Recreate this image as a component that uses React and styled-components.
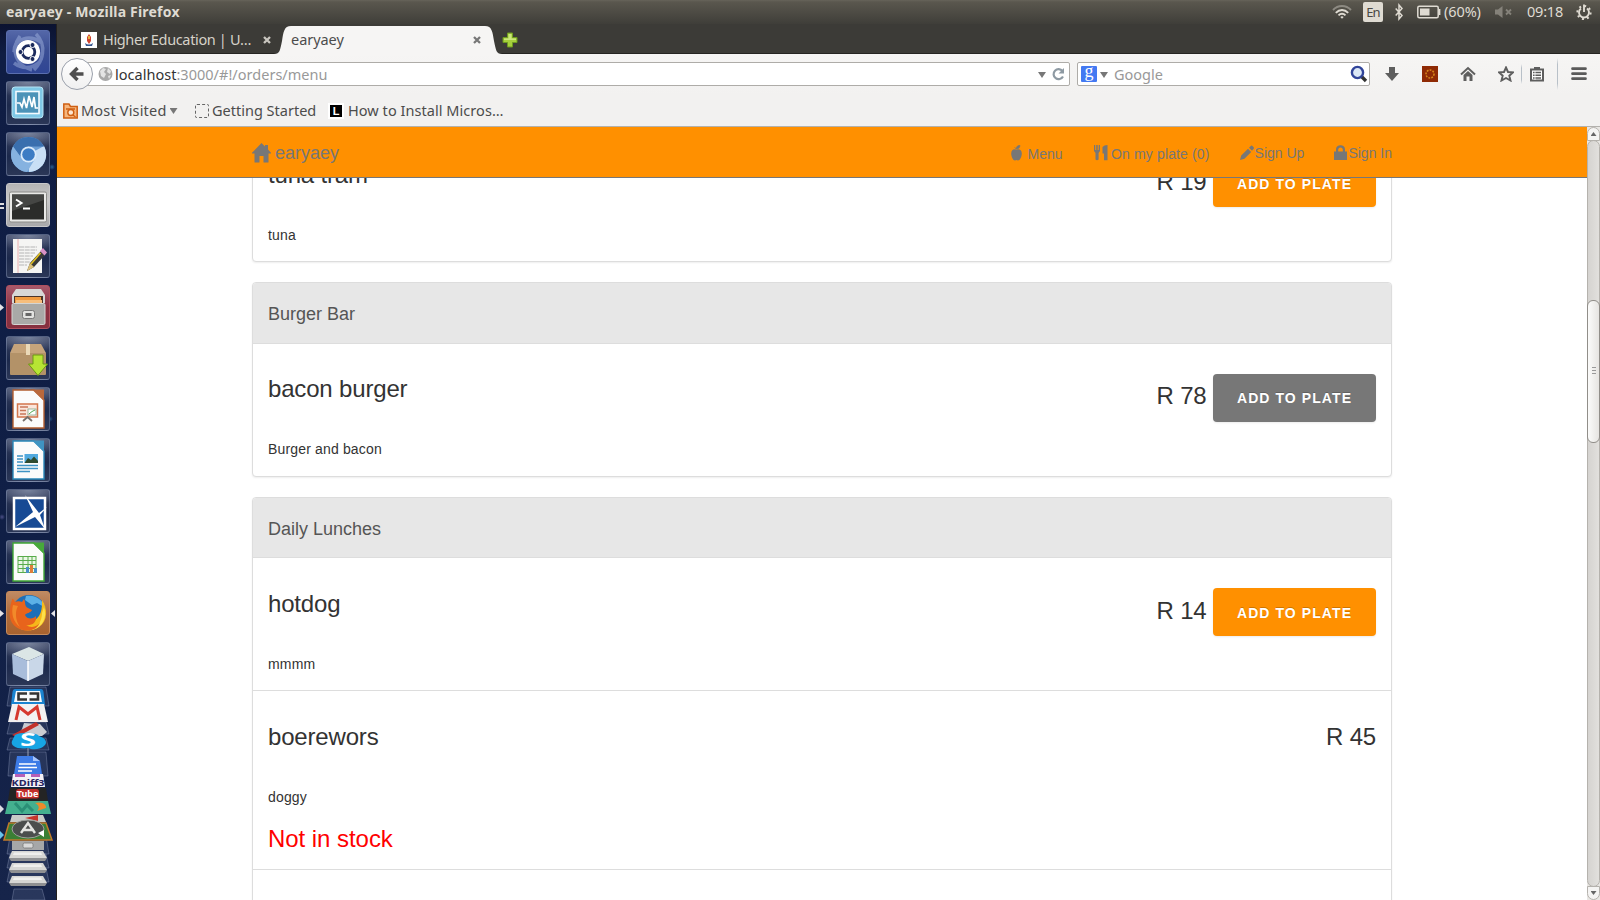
import React from "react";
import styled, { createGlobalStyle, css } from "styled-components";

const GlobalStyle = createGlobalStyle`
  *, *::before, *::after { box-sizing: border-box; }
  body { margin: 0; overflow: hidden; background: #fff; }
  svg { display: block; flex: none; }
`;

const uiFont = `"Noto Sans", "Open Sans", sans-serif`;
const pageFont = `"Liberation Sans", Arial, sans-serif`;

/* ---------- desktop shell ---------- */

const Desktop = styled.div`
  width: 1600px;
  height: 900px;
  display: flex;
  flex-direction: column;
  overflow: hidden;
  font-family: ${uiFont};
`;

const TopPanel = styled.header`
  height: 24px;
  flex: none;
  display: flex;
  align-items: center;
  justify-content: space-between;
  padding: 0 8px 0 6px;
  background: linear-gradient(#67645a 0, #5a574e 2px, #3f3e39 100%);
  color: #dfdbd2;
`;

const WindowTitle = styled.span`
  font-size: 14px;
  font-weight: 700;
  line-height: 24px;
  letter-spacing: 0.2px;
  white-space: nowrap;
`;

const Indicators = styled.div`
  display: flex;
  align-items: center;
  height: 24px;
`;

const Indicator = styled.span`
  width: ${(p) => p.$w}px;
  height: 24px;
  margin-left: ${(p) => p.$gap || 0}px;
  font-size: 14.5px;
  line-height: 23px;
  letter-spacing: ${(p) => p.$track || "0"};
  white-space: nowrap;
`;

const LangBadge = styled.span`
  width: 20px;
  height: 20px;
  margin-left: 11px;
  border-radius: 2px;
  background: #dfdbd2;
  color: #4a4843;
  font-size: 13px;
  line-height: 20px;
  text-align: center;
  letter-spacing: -0.8px;
`;

const Workspace = styled.div`
  flex: 1;
  display: flex;
  min-height: 0;
`;

/* ---------- launcher ---------- */

const LauncherBar = styled.aside`
  width: 57px;
  flex: none;
  display: flex;
  flex-direction: column;
  align-items: flex-start;
  gap: 7px;
  padding: 6px 0 0 6px;
  border-right: 1px solid #23201f;
  background:
    radial-gradient(circle at 52px 143px, #2a5f8e 0, transparent 3px),
    radial-gradient(circle at 27px 186px, #24507e 0, transparent 3px),
    radial-gradient(circle at 50px 395px, #24507e 0, transparent 3px),
    radial-gradient(circle at 2px 493px, #4b4f86 0, transparent 3px),
    linear-gradient(#0b1230 0, #0f1d44 30px, #101f46 60%, #16244a 100%);
`;

const Tile = styled.div`
  position: relative;
  width: 44px;
  height: 44px;
  flex: none;
  border-radius: 3px;
  border: 1px solid ${(p) => p.$edge || "rgba(150,165,200,0.38)"};
  background: ${(p) =>
    p.$bg ||
    "radial-gradient(ellipse 36px 16px at 50% 0, rgba(190,200,220,0.5), transparent), linear-gradient(#36405f, #1c294c 55%, #2b3757)"};
`;

const Pip = styled.i`
  position: absolute;
  top: 18px;
  ${(p) => (p.$right ? "right: -6px;" : "left: -7px;")}
  width: 4px;
  height: 7px;
  background: #e4e4e8;
  clip-path: ${(p) =>
    p.$right
      ? "polygon(100% 0, 100% 100%, 0 50%)"
      : "polygon(0 0, 100% 50%, 0 100%)"};
`;

const DoublePip = styled.i`
  position: absolute;
  top: 19px;
  left: -7px;
  width: 4px;
  height: 6px;
  border-top: 2px solid #dcdce0;
  border-bottom: 2px solid #dcdce0;
`;

const TileArt = styled.svg.attrs({ viewBox: "0 0 44 44", width: 44, height: 44 })`
  margin: -1px;
`;

const FoldedStack = styled.svg.attrs({ viewBox: "0 0 57 214", width: 57, height: 214 })`
  margin: -7px 0 0 -6px;
`;

const DocumentArt = ({ edge, corner, children }) => (
  <TileArt>
    <path d="M7 3H28L38 13V41H7Z" fill="#fbfbfb" stroke={edge} strokeWidth="1.4" />
    <path d="M26 2.5H38V14Z" fill={corner} />
    {children}
  </TileArt>
);

const UbuntuArt = () => (
  <TileArt>
    <path d="M8 22C8 8 24 4 36 13M36 22C38 36 20 42 8 33M14 6C4 20 10 36 26 40M30 4C42 16 36 32 28 40" fill="none" stroke="#a9bbe4" strokeOpacity=".45" strokeWidth="3.5" />
    <circle cx="22" cy="22" r="12" fill="#fff" />
    <circle cx="22.500" cy="22" r="6.300" fill="none" stroke="#1b2a5c" strokeWidth="2.800" />
    <g fill="#1b2a5c" stroke="#fff" strokeWidth="1">
      <circle cx="14.500" cy="22" r="2.500" />
      <circle cx="26.500" cy="15" r="2.500" />
      <circle cx="26.500" cy="29" r="2.500" />
    </g>
  </TileArt>
);

const MonitorArt = () => (
  <TileArt>
    <rect x="6" y="6" width="31" height="31" rx="3" fill="#7fc8e6" stroke="#b8e4f4" />
    <rect x="10" y="10.500" width="23" height="22" fill="#4c93b8" stroke="#f4fbff" strokeWidth="1.6" />
    <path d="M11 22H14L16 26L18 18L20.500 27L23 15L26 26L28 16L29.500 27H32" fill="none" stroke="#fff" strokeWidth="1.700" />
  </TileArt>
);

const ChromiumArt = () => (
  <TileArt>
    <circle cx="22.500" cy="22.500" r="17.500" fill="#6d9fd4" />
    <path d="M22.500 22.500L38 14A17.500 17.500 0 0 1 23 40Z" fill="#c9dff5" />
    <path d="M7 14.500A17.500 17.500 0 0 1 38 14.500H22L14 24Z" fill="#3a6fae" />
    <path d="M7 14.500A17.500 17.500 0 0 0 21 40L29 27L14 24Z" fill="#86b2e0" />
    <circle cx="22.500" cy="22.500" r="8" fill="#dcebfa" />
    <circle cx="22.500" cy="22.500" r="6.300" fill="#3d7cc4" />
  </TileArt>
);

const TerminalArt = () => (
  <TileArt>
    <rect x="3.500" y="9" width="37" height="30" rx="1.500" fill="#e9e9e7" stroke="#8b8b88" />
    <rect x="6" y="11.500" width="32" height="25" fill="#2b2c2a" />
    <path d="M6 11.500H38V17L6 28Z" fill="#454644" />
    <path d="M10 16.500L15.500 20L10 23.500M17 25.500H24" fill="none" stroke="#fff" strokeWidth="2" />
  </TileArt>
);

const EditorArt = () => (
  <TileArt>
    <path d="M7 5H36V39H7Z" fill="#f5f5f3" />
    <path d="M12 5V39" stroke="#e8a0a0" strokeWidth=".8" />
    <path d="M13 13H31M13 16H31M13 19H29M13 22H27M13 25H25M13 28H24M13 31H21" stroke="#b5b5b5" strokeWidth="1" strokeDasharray="5 .7" />
    <path d="M21 37L24 29L35 17L39 21L28 33Z" fill="#3a3a38" />
    <path d="M24 29L28 33L21 37Z" fill="#dcc17a" />
    <path d="M25 30L34.500 19" stroke="#e3c21f" strokeWidth="1.600" />
    <path d="M34 17L37 14L41 18.500L38.500 21.500Z" fill="#d892c6" />
  </TileArt>
);

const FilesArt = () => (
  <TileArt>
    <path d="M6 10L10 4H35L39 10V18H6Z" fill="#d8d7d5" />
    <path d="M8 11H37V20H8Z" fill="#4b3428" />
    <path d="M9 12H35V19H9Z" fill="#f19a3e" />
    <path d="M10 15H36V20H10Z" fill="#f7be7c" />
    <rect x="6" y="18.500" width="33" height="21" rx="1.500" fill="#a9a9a7" stroke="#d5d5d3" />
    <rect x="16.500" y="25.500" width="12" height="8" rx="2" fill="#e2e2e0" stroke="#777" />
    <rect x="19.500" y="28" width="6" height="3" fill="#666" />
  </TileArt>
);

const PackageArt = () => (
  <TileArt>
    <path d="M8 8H35L40 17H4Z" fill="#c6a47b" />
    <path d="M4 17H40V38Q40 39 39 39H5Q4 39 4 38Z" fill="#b39268" />
    <path d="M20 8H24V19H20Z" fill="#ead9b8" />
    <path d="M27 19H37V28H41.500L32 39.500L22.500 28H27Z" fill="#b7e434" stroke="#6c9a12" />
  </TileArt>
);

const ImpressArt = () => (
  <DocumentArt edge="#b35d2f" corner="#b9683c">
    <rect x="11.500" y="17" width="20" height="13" fill="#fbe6dc" stroke="#d3764c" strokeWidth="1.500" />
    <path d="M14 20H22M14 23.500H20M14 27H20" stroke="#c8775a" strokeWidth="1.500" />
    <rect x="22" y="22" width="8" height="6" fill="#fff" stroke="#86a58a" strokeWidth=".8" />
    <path d="M23 27L26 24.500L29 23" stroke="#4ea84c" fill="none" />
    <path d="M17 34L21.500 30L26 34" fill="none" stroke="#77706c" strokeWidth="1.800" />
  </DocumentArt>
);

const WriterArt = () => (
  <DocumentArt edge="#2887b8" corner="#3f94c2">
    <path d="M11 18H17M11 21H17M11 24H17M11 27.500H32M11 30.500H32M11 33.500H24" stroke="#3e93c4" strokeWidth="1.500" />
    <rect x="18.500" y="16" width="13.500" height="9" fill="#50a9df" />
    <path d="M18.500 25L22 20L25 22L28 18.500L32 23V25Z" fill="#2e4a2e" />
  </DocumentArt>
);

const DrawArt = () => (
  <TileArt>
    <rect x="8" y="9" width="31" height="31" fill="#174a94" stroke="#fff" strokeWidth="2.500" />
    <path d="M9 38L27 23L19 6L33 24L41 18L34 26L39 40L29 28Z" fill="#fff" />
  </TileArt>
);

const CalcArt = () => (
  <DocumentArt edge="#3fa535" corner="#47a93a">
    <rect x="12" y="16.500" width="18" height="16" fill="#eaf7e6" stroke="#58ab4b" />
    <path d="M12 20.500H30M12 24.500H30M12 28.500H30M17 16.500V32.500M22 16.500V32.500M26 16.500V32.500" stroke="#58ab4b" />
    <rect x="20" y="27" width="3" height="6" fill="#4a90c8" />
    <rect x="24" y="25" width="3" height="8" fill="#df7d3a" />
    <rect x="28" y="28" width="3" height="5" fill="#4a90c8" />
  </DocumentArt>
);

const FirefoxArt = () => (
  <TileArt>
    <circle cx="23" cy="21" r="17" fill="#1d6fb8" />
    <path d="M20 5C30 3 38 10 38 16L31 12L26 14L19 9Z" fill="#5cb0e6" />
    <path d="M36 9C42 17 42 30 33 36C24 42 12 40 7 31L20 30C30 32 37 25 36 9Z" fill="#f6b81a" />
    <path d="M38 16C42 28 35 38 24 39.500C32 36 36 30 36 22Z" fill="#fde04c" />
    <path d="M6 9C6 7 7 7 9 11C11 10 14 10 16 11L18 8C20 12 18 15 22 17L26 19C25 22 20 22 19 24C21 29 28 28 30 25C31 32 25 35 20 34C26 38 32 35 34 31C32 38 24 41 17 39C7 37 2 28 4 19C4 15 5 12 6 9Z" fill="#e8641c" />
    <path d="M7 14C5 22 7 31 14 36C9 29 9 20 12 15Z" fill="#f28a2a" />
  </TileArt>
);

const CubeArt = () => (
  <TileArt>
    <path d="M6 12L23 5L38 12L22 19Z" fill="#dbe6e6" />
    <path d="M6 12L22 19V39L7 32Z" fill="#a9bddb" />
    <path d="M38 12L22 19V39L37 32Z" fill="#c9d7e8" />
    <path d="M22 19V39" stroke="#fff" strokeWidth="1.500" />
  </TileArt>
);

const tiles = [
  { key: "dash", Art: UbuntuArt, bg: "linear-gradient(#5467a8, #3b4f94 45%, #2f4594)", edge: "#5a6eae" },
  { key: "monitor", Art: MonitorArt },
  { key: "chromium", Art: ChromiumArt },
  { key: "terminal", Art: TerminalArt, bg: "linear-gradient(#b4b4b4, #c9c9c9 40%, #a9a9ab)", edge: "#c8c8ca", pips: "double" },
  { key: "editor", Art: EditorArt },
  { key: "files", Art: FilesArt, bg: "linear-gradient(#a7586a, #8d3344 50%, #86303f)", edge: "#b0505e", pips: "left" },
  { key: "package", Art: PackageArt },
  { key: "impress", Art: ImpressArt },
  { key: "writer", Art: WriterArt },
  { key: "draw", Art: DrawArt },
  { key: "calc", Art: CalcArt },
  { key: "firefox", Art: FirefoxArt, bg: "linear-gradient(#c08a63, #b06d3e 50%, #a8632f)", edge: "#c58a5c", pips: "both" },
  { key: "cube", Art: CubeArt },
];

const Drive = ({ y }) => (
  <g transform={`translate(0 ${y})`}>
    <path d="M12 0H43L47 7H9Z" fill="#d6d6d4" />
    <path d="M14 1.500H41L42 4H13Z" fill="#efefed" />
    <path d="M9 7H47L45 10H11Z" fill="#8f9092" />
  </g>
);

/* The tail of the launcher, where the icons fold over one another. */
const Folded = () => (
  <FoldedStack>
    <g fill="#8d99b8" fillOpacity=".16" stroke="#9aa6c4" strokeOpacity=".45" strokeWidth=".8">
      <path d="M10 1H46L49 20H7Z" />
      <path d="M10 36H46L49 48H7Z" />
      <path d="M10 52H46L49 64H7Z" />
      <path d="M10 66H46L48 90H8Z" />
      <path d="M10 150H46L49 168H7Z" />
      <path d="M10 168H46L49 182H7Z" />
      <path d="M10 182H46L49 196H7Z" />
      <path d="M14 203H42L45 214H12Z" />
    </g>
    <path d="M15 3H41Q43 3 43.500 6L45 19H11L12.500 6Q13 3 15 3Z" fill="#1b84d0" />
    <path d="M16 5H40L42 16H14Z" fill="#f7f9fb" />
    <path d="M27 7.500H18.500V13.500H27M29.500 7.500H38V13.500H29.500" fill="none" stroke="#333" strokeWidth="2.600" />
    <path d="M12 18H44L48 36H8Z" fill="#f3f1f1" />
    <path d="M16 34L19 21L28 28L37 21L40 34" fill="none" stroke="#d6392f" strokeWidth="3" />
    <path d="M24 37L40 38L47 46L42 50H18L22 43Z" fill="#c9ccd2" />
    <path d="M12 49L36 36L39 39L17 51Z" fill="#c2322b" />
    <path d="M15 49C20 46 36 46 39 50C46 52 48 57 44 60C40 64 32 64 28 62C18 64 10 60 12 55Z" fill="#17a5e4" />
    <text x="28" y="60" fill="#fff" fontFamily={uiFont} fontWeight="700" fontSize="17" textAnchor="middle" textLength="16" lengthAdjust="spacingAndGlyphs">S</text>
    <path d="M28 62V70" stroke="#c5cbd8" strokeWidth=".7" />
    <path d="M17 70H33L40 75L42 88H14Z" fill="#3d7be6" />
    <path d="M33 70L40 75H33Z" fill="#a7c5fa" />
    <path d="M19 78H36M18.500 81.500H37M18 85H32" stroke="#fff" strokeWidth="1.500" />
    <path d="M13 88H43L45 101H11Z" fill="#f3f1f6" />
    <path d="M15 88H25V91H15ZM31 88H40V91H31Z" fill="#b65fb6" />
    <text x="28" y="100" fill="#27235f" fontFamily={uiFont} fontWeight="700" fontSize="9" textAnchor="middle" textLength="33" lengthAdjust="spacingAndGlyphs">KDiff3</text>
    <path d="M10 102H46L48 115H8Z" fill="#242424" />
    <rect x="16" y="103" width="23" height="9.500" rx="2.500" fill="#c22f2c" />
    <text x="27.500" y="111" fill="#fff" fontFamily={uiFont} fontWeight="700" fontSize="9" textAnchor="middle">Tube</text>
    <path d="M8 115H48L51 128H5Z" fill="#44b08f" />
    <path d="M15 117L22 125L27 119L33 125" fill="none" stroke="#2b8f76" strokeWidth="3" />
    <path d="M35 117C42 115 47 119 46 122L37 125C40 122 39 119 35 117Z" fill="#ee8a2a" />
    <path d="M12 129H43L46 136H10Z" fill="#c9cbc8" />
    <path d="M25 132L38 129V135Z" fill="#c5362c" />
    <path d="M9 137H46L52 154H4Z" fill="#3b7f34" stroke="#c07a2b" strokeWidth="1.500" />
    <ellipse cx="28" cy="143" rx="16" ry="9" fill="#4b4e4d" stroke="#9da09c" />
    <path d="M21 147L28 137L35 147M22 144H34" fill="none" stroke="#e3e4e1" strokeWidth="2.400" />
    <path d="M38 147L44 144V151Z" fill="#fff" />
    <path d="M12 155H44V164H12Z" fill="#a6a7a8" />
    <rect x="23" y="157" width="10" height="5" rx="1.500" fill="#d9d9d9" stroke="#777" strokeWidth=".8" />
    <Drive y={165} />
    <Drive y={177} />
    <Drive y={190} />
    <path d="M0 119L4 123L0 127Z" fill="#dcdce2" />
    <path d="M0 145L4 149L0 153Z" fill="#67c3ee" />
  </FoldedStack>
);

const Launcher = () => (
  <LauncherBar>
    {tiles.map(({ key, Art, bg, edge, pips }) => (
      <Tile key={key} $bg={bg} $edge={edge}>
        <Art />
        {pips === "double" && <DoublePip />}
        {(pips === "left" || pips === "both") && <Pip />}
        {pips === "both" && <Pip $right />}
      </Tile>
    ))}
    <Folded />
  </LauncherBar>
);

/* ---------- browser chrome ---------- */

const Browser = styled.main`
  flex: 1;
  min-width: 0;
  display: flex;
  flex-direction: column;
`;

const TabStrip = styled.div`
  height: 30px;
  flex: none;
  display: flex;
  align-items: flex-end;
  background: #3c3b37;
  box-shadow: inset 0 -1px #262522;
`;

const InactiveTab = styled.div`
  width: 217px;
  height: 28px;
  display: flex;
  align-items: center;
  padding: 0 3px 0 24px;
  color: #d6d2c9;
`;

const ActiveTab = styled.div`
  height: 28px;
  display: flex;
  color: #4c4c4c;
`;

const TabBody = styled.div`
  width: 194px;
  display: flex;
  align-items: center;
  background: #f6f5f4;
`;

const TabTitle = styled.span`
  flex: 1;
  padding-left: ${(p) => p.$pad || 0}px;
  padding-bottom: 1px;
  font-size: 14.5px;
  line-height: 25px;
  letter-spacing: ${(p) => p.$track || "0"};
  white-space: nowrap;
`;

const NewTab = styled.div`
  height: 28px;
  display: flex;
  align-items: center;
`;

const NavToolbar = styled.div`
  height: 41px;
  flex: none;
  display: flex;
  align-items: center;
  padding: 0 13px 1px 4px;
  background: linear-gradient(#f6f5f4, #f2f1f0);
`;

const BackButton = styled.div`
  position: relative;
  z-index: 1;
  width: 32px;
  height: 32px;
  margin-right: -16px;
  display: grid;
  place-items: center;
  flex: none;
  border: 1px solid #9aa0ab;
  border-radius: 50%;
  background: linear-gradient(#fff, #f0f0f0);
`;

const Field = styled.div`
  width: ${(p) => p.$w}px;
  height: 24px;
  flex: none;
  display: flex;
  align-items: center;
  background: #fff;
  border: 1px solid #aeaca8;
  border-radius: 2px;
`;

const FieldText = styled.span`
  flex: 1;
  font-size: 14.5px;
  line-height: 22px;
  letter-spacing: ${(p) => p.$track || "0"};
  color: #999;
  white-space: nowrap;
  b { font-weight: 400; color: #333; }
`;

const Caret = styled.i`
  width: 8px;
  height: 6px;
  flex: none;
  margin: ${(p) => p.$m || "0"};
  background: #777;
  clip-path: polygon(0 0, 100% 0, 50% 100%);
`;

const GoogleMark = styled.span`
  width: 16px;
  height: 16px;
  margin-left: 3px;
  border-radius: 1px;
  background: #4379f2;
  color: #fff;
  font: 400 18px/11px "Liberation Serif", serif;
  text-align: center;
`;

const ToolIcon = styled.div`
  width: 16px;
  height: 16px;
  flex: none;
  margin-left: ${(p) => p.$gap}px;
`;

const Divider = styled.i`
  width: 1px;
  height: ${(p) => p.$h}px;
  margin-left: ${(p) => p.$gap}px;
  background: linear-gradient(transparent, #b8c0c8 20%, #b8c0c8 80%, transparent);
`;

const BookmarksBar = styled.div`
  height: 32px;
  flex: none;
  display: flex;
  align-items: center;
  padding-left: 6px;
  background: #f2f1f0;
  border-bottom: 1px solid #b3b1ad;
`;

const Bookmark = styled.div`
  width: ${(p) => p.$w}px;
  display: flex;
  align-items: center;
  gap: ${(p) => p.$gap}px;
  color: #4c4c4c;
`;

const BookmarkLabel = styled.span`
  padding-bottom: 2px;
  font-size: 14.5px;
  line-height: 28px;
  letter-spacing: ${(p) => p.$track || "0"};
  white-space: nowrap;
`;

const BlankFavicon = styled.i`
  width: 14px;
  height: 14px;
  flex: none;
  border: 1px dashed #666;
  border-radius: 2px;
`;

const LetterFavicon = styled.span`
  width: 16px;
  height: 16px;
  flex: none;
  border: 2px solid #fff;
  background: #000;
  color: #fff;
  font: 700 11px/12px "Liberation Sans", sans-serif;
  text-align: center;
`;

const CloseIcon = ({ color }) => (
  <svg width="8" height="8" viewBox="0 0 8 8">
    <path d="M1 1L7 7M7 1L1 7" stroke={color} strokeWidth="2.300" />
  </svg>
);

/* ---------- web page ---------- */

const PageRow = styled.div`
  flex: 1;
  min-height: 0;
  display: flex;
`;

const Page = styled.div`
  flex: 1;
  display: flex;
  flex-direction: column;
  background: #fff;
  font-family: ${pageFont};
`;

const SiteNav = styled.nav`
  height: 51px;
  flex: none;
  background: #ff9000;
  border-bottom: 1px solid #777;
  color: #777;
`;

const Container = styled.div`
  width: 1140px;
  margin: 0 auto;
`;

const NavInner = styled(Container)`
  height: 50px;
  display: flex;
  align-items: flex-start;
  justify-content: space-between;
`;

const Brand = styled.div`
  display: flex;
  align-items: center;
  gap: 4px;
  padding-top: 15px;
  font-size: 18px;
  line-height: 22px;
`;

const NavLinks = styled.div`
  display: flex;
`;

const NavLink = styled.div`
  display: flex;
  align-items: center;
  gap: ${(p) => p.$gap}px;
  margin-left: ${(p) => p.$before || 30}px;
  padding-top: ${(p) => p.$top}px;
  font-size: 14px;
  line-height: 20px;
  letter-spacing: ${(p) => p.$track || "0"};
  white-space: nowrap;
  svg { margin-bottom: ${(p) => p.$lift || 0}px; }
`;

const Feed = styled.section`
  flex: 1;
  min-height: 0;
  overflow: hidden;
`;

const MenuList = styled(Container)`
  margin-top: ${(p) => p.$scroll}px;
`;

const Panel = styled.div`
  margin-bottom: 20px;
  border: 1px solid #ddd;
  border-radius: 4px;
  background: #fff;
  box-shadow: 0 1px 2px rgba(0, 0, 0, 0.07);
`;

const PanelHeading = styled.div`
  height: 60.4px;
  padding: 21.9px 15px 0;
  border-bottom: 1px solid #ddd;
  border-radius: 3px 3px 0 0;
  background: #e7e7e7;
  color: #555;
  font-size: 18px;
  line-height: 19.8px;
`;

const MenuItem = styled.div`
  display: flex;
  justify-content: space-between;
  height: ${(p) => p.$h || 132}px;
  padding: 0 15px;
  color: #333;
  & + & { border-top: 1px solid #ddd; height: ${(p) => (p.$h || 132) + 1}px; }
`;

const ItemText = styled.div`
  padding-top: 32.6px;
`;

const headingText = css`
  margin: 0;
  font-size: 24px;
  font-weight: 400;
  line-height: 26.4px;
  letter-spacing: -0.17px;
`;

const ItemName = styled.h3`
  ${headingText}
`;

const Description = styled.p`
  margin: 36.7px 0 0;
  font-size: 14px;
  line-height: 20px;
  letter-spacing: 0.16px;
`;

const StockNote = styled.h3`
  ${headingText}
  margin-top: 19.1px;
  letter-spacing: -0.05px;
  color: #f00;
`;

const Purchase = styled.div`
  display: flex;
  align-items: flex-start;
  gap: 6.5px;
  padding-top: 30px;
`;

const Price = styled.span`
  ${headingText}
  padding-top: ${(p) => (p.$alone ? 2.6 : 9.6)}px;
`;

const AddButton = styled.button`
  width: 163px;
  height: 48px;
  display: flex;
  align-items: flex-start;
  justify-content: center;
  padding: 0.6px 0 0;
  border: 0;
  border-radius: 4px;
  background: ${(p) => (p.$pressed ? "#777" : "#ff9000")};
  box-shadow: 0 1px 2px rgba(0, 0, 0, 0.08);
  color: #fff;
  font: 700 14px/48px ${pageFont};
  letter-spacing: 1.08px;
  text-shadow: 0 -1px 0 rgba(0, 0, 0, 0.2);
  text-transform: uppercase;
`;

/* ---------- scrollbar ---------- */

const Scrollbar = styled.div`
  width: 13px;
  flex: none;
  display: flex;
  flex-direction: column;
  background: #e9e7e4;
`;

const ScrollEnd = styled.div`
  height: 14px;
  flex: none;
  display: grid;
  place-items: center;
  border: 1px solid #b5b2ad;
  border-radius: ${(p) => (p.$down ? "0 0 7px 7px" : "7px 7px 0 0")};
  background: #f5f4f3;
`;

const ScrollArrow = styled.i`
  width: 6px;
  height: 4px;
  background: #666;
  clip-path: ${(p) =>
    p.$down ? "polygon(0 0, 100% 0, 50% 100%)" : "polygon(50% 0, 100% 100%, 0 100%)"};
`;

const Track = styled.div`
  flex: 1;
  margin: -1px 0;
  padding-top: 159px;
  border: 1px solid #b5b2ad;
  border-radius: 7px;
  background: linear-gradient(90deg, #d5d3d0, #e2e0dd);
`;

const Thumb = styled.div`
  width: 13px;
  height: 143px;
  margin-left: -1px;
  display: flex;
  flex-direction: column;
  align-items: center;
  justify-content: center;
  gap: 2px;
  padding-bottom: 2px;
  border: 1px solid #918e89;
  border-radius: 6px;
  background: linear-gradient(90deg, #fbfbfa, #e6e4e1);
`;

const Grip = styled.i`
  width: 4px;
  height: 1px;
  background: #999;
`;

const panels = [
  { title: "Tramezzini", items: [{ name: "tuna tram", price: "R 19", text: "tuna", orderable: true }] },
  { title: "Burger Bar", items: [{ name: "bacon burger", price: "R 78", text: "Burger and bacon", orderable: true, pressed: true }] },
  {
    title: "Daily Lunches",
    items: [
      { name: "hotdog", price: "R 14", text: "mmmm", orderable: true },
      { name: "boerewors", price: "R 45", text: "doggy", note: "Not in stock", height: 178.3 },
      { name: "", price: "", text: "" },
    ],
  },
];

const StatusIndicators = () => (
  <Indicators>
    <svg width="20" height="14" viewBox="0 0 20 14" fill="none" strokeWidth="1.900">
      <path d="M1 5C6-.3 14-.3 19 5" stroke="#8d8a82" />
      <path d="M3.800 7.800C7.500 4 12.500 4 16.200 7.800" stroke="#dfdbd2" />
      <path d="M6.500 10.300C8.600 8.200 11.400 8.200 13.500 10.300" stroke="#dfdbd2" />
      <path d="M8.300 12L10 13.800L11.700 12Q10 10.600 8.300 12Z" fill="#dfdbd2" />
    </svg>
    <LangBadge>En</LangBadge>
    <Indicator $w={8} $gap={12}>
      <svg width="8" height="24" viewBox="0 -4 8 24">
        <path d="M.7 4.500L7 11.500L4 15V1L7 4.500L.7 11.500" fill="none" stroke="#dfdbd2" strokeWidth="1.500" />
      </svg>
    </Indicator>
    <Indicator $w={24} $gap={14}>
      <svg width="24" height="24" viewBox="0 0 24 24">
        <rect x=".8" y="6.300" width="20.400" height="11.400" rx="1.500" fill="none" stroke="#dfdbd2" strokeWidth="1.500" />
        <rect x="3" y="8.500" width="9.500" height="7" fill="#dfdbd2" />
        <path d="M22.500 9V15" stroke="#dfdbd2" strokeWidth="1.800" />
      </svg>
    </Indicator>
    <Indicator $w={39} $gap={3} $track="-0.1px">(60%)</Indicator>
    <Indicator $w={18} $gap={12}>
      <svg width="18" height="24" viewBox="0 0 18 24">
        <path d="M0 9.500H3L7.500 6V18L3 14.500H0Z" fill="#85827a" />
        <path d="M11 9.500L16 14.500M16 9.500L11 14.500" stroke="#85827a" strokeWidth="1.800" />
      </svg>
    </Indicator>
    <Indicator $w={37} $gap={14} $track="-0.2px">09:18</Indicator>
    <Indicator $w={16} $gap={12}>
      <svg width="16" height="24" viewBox="0 -4 16 24">
        <circle cx="8" cy="8.500" r="6.600" fill="none" stroke="#dfdbd2" strokeWidth="2" strokeDasharray="2 3.180" />
        <path d="M5 4.500A5 5 0 1 0 11 4.500" fill="none" stroke="#dfdbd2" strokeWidth="1.900" />
        <path d="M8 .5V8" stroke="#dfdbd2" strokeWidth="1.900" />
      </svg>
    </Indicator>
  </Indicators>
);

const Tabs = () => (
  <TabStrip>
    <InactiveTab>
      <svg width="16" height="16" viewBox="0 0 16 16">
        <rect width="16" height="16" fill="#fff" />
        <path d="M8 2L10 5V9L8 12L6 9V5Z" fill="#d0442e" />
        <path d="M4 11Q8 14 12 11L11 14H5Z" fill="#35558f" />
        <path d="M7 4H9V7H7Z" fill="#e7b341" />
      </svg>
      <TabTitle $pad={6} $track="-0.35px">Higher Education | U…</TabTitle>
      <CloseIcon color="#c9c6bf" />
    </InactiveTab>
    <ActiveTab>
      <svg width="17" height="28" viewBox="0 0 17 28">
        <path d="M0 28C6 28 6 24 8 15C9.500 6 10 0 17 0V28Z" fill="#f6f5f4" />
      </svg>
      <TabBody>
        <TabTitle $track="-0.05px">earyaey</TabTitle>
        <CloseIcon color="#777" />
        <svg width="4" height="8" />
      </TabBody>
      <svg width="17" height="28" viewBox="0 0 17 28">
        <path d="M17 28C11 28 11 24 9 15C7.500 6 7 0 0 0V28Z" fill="#f6f5f4" />
      </svg>
    </ActiveTab>
    <NewTab>
      <svg width="16" height="16" viewBox="0 0 16 16">
        <path d="M5.500 1H10.500V5.500H15V10.500H10.500V15H5.500V10.500H1V5.500H5.500Z" fill="#a6cf3c" stroke="#6d9a1f" />
        <path d="M6.500 2H9.500V6.500H14V8H2V6.500H6.500Z" fill="#cbe67c" />
      </svg>
    </NewTab>
  </TabStrip>
);

const Toolbar = () => (
  <NavToolbar>
    <BackButton>
      <svg width="16" height="16" viewBox="0 0 16 16">
        <path d="M8.500 2L2.500 8L8.500 14M3 8H14.500" fill="none" stroke="#4f4f4f" strokeWidth="3.400" />
      </svg>
    </BackButton>
    <Field $w={993}>
      <svg width="37" height="16" viewBox="-20 0 37 16">
        <circle cx="7.500" cy="8" r="7" fill="#a8a8a8" />
        <path d="M2 5L5 2L8 3L6 6L8 8L6 12L3 10ZM10 2L13 5L12 8L9 6ZM10 10L13 9L11 13Z" fill="#e3e3e3" />
      </svg>
      <FieldText $track="0.02px"><b>localhost</b>:3000/#!/orders/menu</FieldText>
      <Caret $m="2px 6px 0 0" />
      <svg width="13" height="14" viewBox="0 0 13 14">
        <path d="M10.500 4A5 5 0 1 0 11 9.500" fill="none" stroke="#8e9aa3" strokeWidth="2.200" />
        <path d="M12 1V6.500H6.500Z" fill="#8e9aa3" />
      </svg>
      <svg width="4" height="4" />
    </Field>
    <svg width="7" height="4" />
    <Field $w={293}>
      <GoogleMark>g</GoogleMark>
      <Caret $m="2px 6px 0 3px" />
      <FieldText>Google</FieldText>
      <svg width="19" height="18" viewBox="0 0 19 18">
        <path d="M11.500 11.500L16 16" stroke="#333" strokeWidth="3.400" />
        <circle cx="7.500" cy="7.500" r="5.600" fill="#dbe7f6" stroke="#31459a" strokeWidth="2.400" />
      </svg>
    </Field>
    <ToolIcon $gap={14}>
      <svg width="16" height="16" viewBox="0 0 16 16">
        <path d="M5 1H11V7H15L8 15L1 7H5Z" fill="#5e5e5e" />
      </svg>
    </ToolIcon>
    <ToolIcon $gap={22}>
      <svg width="16" height="16" viewBox="0 0 16 16">
        <rect width="16" height="16" fill="#8f2a05" />
        <circle cx="8" cy="8" r="4" fill="none" stroke="#d98a1c" strokeWidth="1.500" strokeDasharray="1.800 1.200" />
      </svg>
    </ToolIcon>
    <ToolIcon $gap={22}>
      <svg width="16" height="16" viewBox="0 0 16 16">
        <path d="M1 8.500L8 2L15 8.500" fill="none" stroke="#5e5e5e" strokeWidth="2" />
        <path d="M3.500 9L8 5L12.500 9V15H9.500V10.500H6.500V15H3.500Z" fill="#5e5e5e" />
      </svg>
    </ToolIcon>
    <ToolIcon $gap={22}>
      <svg width="16" height="16" viewBox="0 0 16 16">
        <path d="M8 1.500L10 6L15 6.400L11.300 9.700L12.500 14.500L8 12L3.500 14.500L4.700 9.700L1 6.400L6 6Z" fill="none" stroke="#5e5e5e" strokeWidth="1.900" />
      </svg>
    </ToolIcon>
    <Divider $h={20} $gap={7} />
    <ToolIcon $gap={7}>
      <svg width="16" height="16" viewBox="0 0 16 16">
        <path d="M2 3.500H14V14.500H2Z" fill="#fff" stroke="#5e5e5e" strokeWidth="2" />
        <path d="M5 1H11V4H5Z" fill="#5e5e5e" />
        <path d="M4 6.500H12M4 9.200H12M4 12H12" stroke="#5e5e5e" strokeWidth="1.400" />
        <path d="M6 5V14" stroke="#fff" strokeWidth=".8" />
      </svg>
    </ToolIcon>
    <Divider $h={32} $gap={12} />
    <ToolIcon $gap={13}>
      <svg width="16" height="16" viewBox="0 0 16 16">
        <path d="M1.500 2.700H14.500M1.500 7.700H14.500M1.500 12.700H14.500" stroke="#5a5a5a" strokeWidth="2.700" strokeLinecap="round" />
      </svg>
    </ToolIcon>
  </NavToolbar>
);

const Bookmarks = () => (
  <BookmarksBar>
    <Bookmark $w={132} $gap={3}>
      <svg width="15" height="16" viewBox="0 0 15 16">
        <path d="M.8 1H6L7.500 3.500H14.200V15H.8Z" fill="#f6b67d" stroke="#cf5f12" strokeWidth="1.500" />
        <circle cx="7.800" cy="9.500" r="3" fill="#fde7d2" stroke="#cf5f12" strokeWidth="1.400" />
        <path d="M3 6H12M10 12L12.500 14" stroke="#cf5f12" strokeWidth="1.300" />
      </svg>
      <BookmarkLabel $track="0.18px">Most Visited</BookmarkLabel>
      <Caret $m="1px 0 0 0" />
    </Bookmark>
    <Bookmark $w={133} $gap={3}>
      <BlankFavicon />
      <BookmarkLabel>Getting Started</BookmarkLabel>
    </Bookmark>
    <Bookmark $w={180} $gap={4}>
      <LetterFavicon>L</LetterFavicon>
      <BookmarkLabel $track="0.05px">How to Install Micros…</BookmarkLabel>
    </Bookmark>
  </BookmarksBar>
);

const SiteHeader = () => (
  <SiteNav>
    <NavInner>
      <Brand>
        <svg width="19" height="20" viewBox="0 0 19 20">
          <path d="M9.500 0L13 3.500V2H16V6.500L19 9.800V10.500H16.500V19.500H11.500V13H7.500V19.500H2.500V10.500H0V9.800Z" fill="#777" />
        </svg>
        earyaey
      </Brand>
      <NavLinks>
        <NavLink $gap={5} $top={17} $lift={2}>
          <svg width="11" height="16" viewBox="0 0 11 16">
            <path d="M5.500 5C7 3.800 10.800 4 10.800 8.500C10.800 12 8.800 15.500 7 15.500Q5.500 14.600 4 15.500C2.200 15.500.2 12 .2 8.500C.2 4 4 3.800 5.500 5Z" fill="#777" />
            <path d="M5.300 4C5 1.800 6.500.5 9 .3C9 2.800 7.500 4 5.300 4ZM5.500 5L3.500 2" fill="#777" stroke="#777" strokeWidth=".6" />
          </svg>
          Menu
        </NavLink>
        <NavLink $before={31.5} $gap={3} $top={17} $lift={2} $track="0.14px">
          <svg width="14" height="16" viewBox="0 0 14 16">
            <path d="M0 0H1.200V5H2.200V0H3.700V5H4.700V0H6V6L4.600 8V14.500Q3 16 1.500 14.500V8L0 6ZM8.500 2Q10 0 13.500 0V15.300H10V8.500H8.500Z" fill="#777" />
          </svg>
          On my plate (0)
        </NavLink>
        <NavLink $gap={0} $top={15}>
          <svg width="15" height="16" viewBox="0 0 15 16">
            <path d="M0 15L1.200 10.500L8 3.700L11.200 7L4.500 13.700ZM9 2.700L11 .7Q11.800.2 12.500.9L13.700 2.200Q14.300 3 13.700 3.800L12 5.800Z" fill="#777" />
          </svg>
          Sign Up
        </NavLink>
        <NavLink $gap={0} $top={15}>
          <svg width="14" height="16" viewBox="0 0 14 16">
            <path d="M0 6.500H2V4Q2.500.3 6.500.3T11 4V6.500H13V15H0ZM4.200 6.500H8.800V4.500Q8.500 2.600 6.500 2.600T4.200 4.500Z" fill="#777" fillRule="evenodd" />
          </svg>
          Sign In
        </NavLink>
      </NavLinks>
    </NavInner>
  </SiteNav>
);

const MenuEntry = ({ item }) => (
  <MenuItem $h={item.height}>
    <ItemText>
      <ItemName>{item.name}</ItemName>
      <Description>{item.text}</Description>
      {item.note && <StockNote>{item.note}</StockNote>}
    </ItemText>
    <Purchase>
      <Price $alone={!item.orderable}>{item.price}</Price>
      {item.orderable && <AddButton $pressed={item.pressed}>Add to plate</AddButton>}
    </Purchase>
  </MenuItem>
);

export default function App() {
  return (
    <Desktop>
      <GlobalStyle />
      <TopPanel>
        <WindowTitle>earyaey - Mozilla Firefox</WindowTitle>
        <StatusIndicators />
      </TopPanel>
      <Workspace>
        <Launcher />
        <Browser>
          <Tabs />
          <Toolbar />
          <Bookmarks />
          <PageRow>
            <Page>
              <SiteHeader />
              <Feed>
                <MenuList $scroll={-110.1}>
                  {panels.map((panel) => (
                    <Panel key={panel.title}>
                      <PanelHeading>{panel.title}</PanelHeading>
                      {panel.items.map((item, i) => (
                        <MenuEntry key={i} item={item} />
                      ))}
                    </Panel>
                  ))}
                </MenuList>
              </Feed>
            </Page>
            <Scrollbar>
              <ScrollEnd><ScrollArrow /></ScrollEnd>
              <Track>
                <Thumb><Grip /><Grip /><Grip /></Thumb>
              </Track>
              <ScrollEnd $down><ScrollArrow $down /></ScrollEnd>
            </Scrollbar>
          </PageRow>
        </Browser>
      </Workspace>
    </Desktop>
  );
}
